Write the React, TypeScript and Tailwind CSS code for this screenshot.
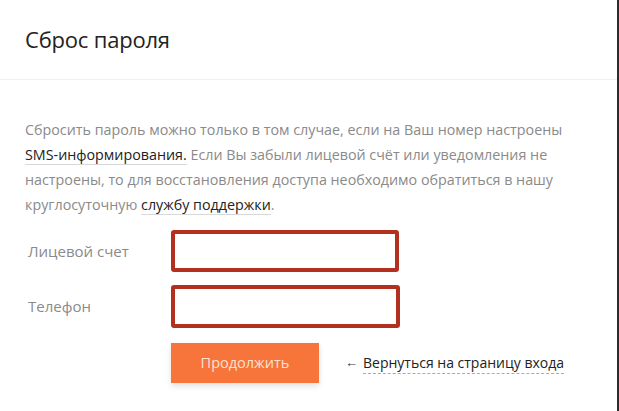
export default function App() {
  return (
    <div className="w-[619px] h-[411px] bg-white border-r-2 border-[#2b2b2b] overflow-hidden font-['Open_Sans',sans-serif]">
      <div className="h-[80px] flex items-center px-[25px] border-b border-[#efefef]">
        <h1 className="text-[22px] text-[#222] tracking-[-0.2px]">Сброс пароля</h1>
      </div>
      <div className="pl-[25px] pr-[40px] pt-[37px]">
        <p className="text-[14.3px] leading-[25px] text-[#8a8a8a]">
          Сбросить пароль можно только в том случае, если на Ваш номер настроены{" "}
          <a className="text-[#222] border-b border-[#d8d8d8]">SMS-информирования.</a> Если Вы забыли лицевой счёт или
          уведомления не настроены, то для восстановления доступа необходимо обратиться в нашу круглосуточную{" "}
          <a className="text-[#222] border-b border-[#d8d8d8]">службу поддержки</a>.
        </p>
        <div className="mt-[13px] flex flex-col gap-[13px]">
          <div className="flex items-center">
            <label className="w-[146px] pl-[3px] text-[15px] text-[#8a8a8a]">Лицевой счет</label>
            <input className="w-[228px] h-[42px] border-4 border-[#b3301f] rounded-[3px] outline-none" />
          </div>
          <div className="flex items-center">
            <label className="w-[146px] pl-[3px] text-[15px] text-[#8a8a8a]">Телефон</label>
            <input className="w-[229px] h-[43px] border-4 border-[#b3301f] rounded-[3px] outline-none" />
          </div>
        </div>
        <div className="mt-[15px] pl-[146px] flex items-center whitespace-nowrap">
          <button className="w-[148px] h-[40px] bg-[#f7743a] text-[#fde3d0] text-[14.5px] shadow-[0_3px_6px_rgba(0,0,0,0.12)]">
            Продолжить
          </button>
          <span className="ml-[26px] text-[13px] text-[#333]">←</span>
          <a className="ml-[5px] text-[14px] text-[#222] border-b border-dashed border-[#aaa] leading-[20px]">
            Вернуться на страницу входа
          </a>
        </div>
      </div>
    </div>
  );
}
